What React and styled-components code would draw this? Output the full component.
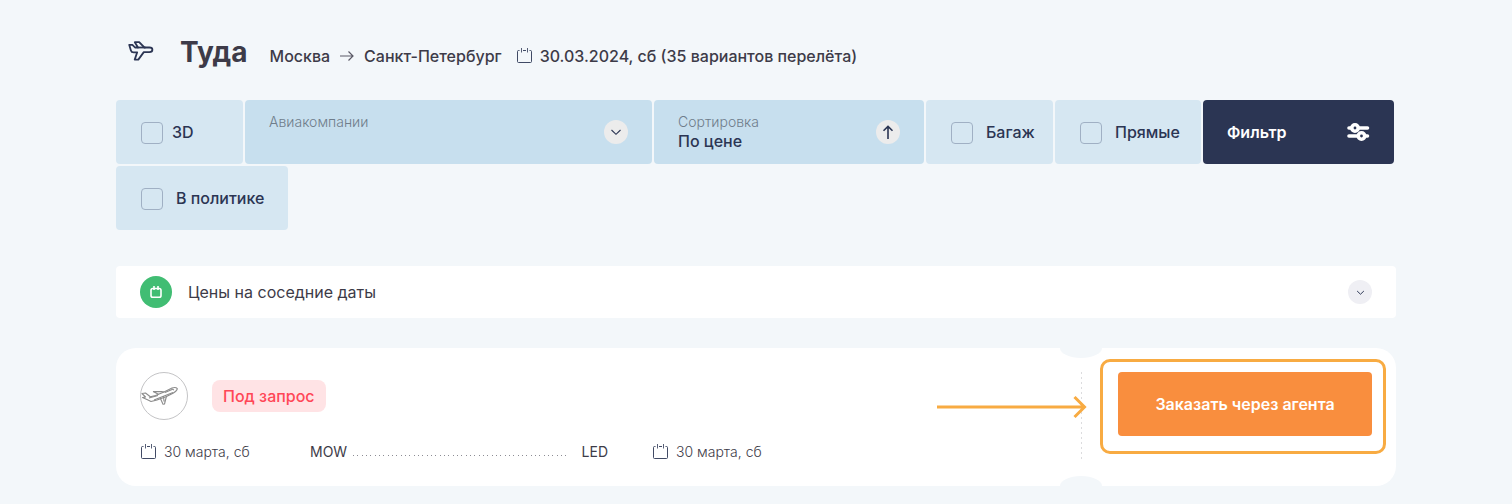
import React from "react";
import styled, { createGlobalStyle, css } from "styled-components";

const GlobalStyle = createGlobalStyle`
  *, *::before, *::after { box-sizing: border-box; }
  body {
    margin: 0;
    background: #f3f7fa;
    color: #3d3b48;
    font-family: Inter, "Noto Sans", sans-serif;
    font-size: 16px;
    line-height: 20px;
  }
  button, input, select { font: inherit; color: inherit; margin: 0; }
  button { border: 0; cursor: pointer; }
`;

const Page = styled.main`
  max-width: 1280px;
  margin: 0 auto;
  padding: 36px 0 18px;
`;

const Header = styled.header`
  display: flex;
  align-items: baseline;
  padding-left: 12px;
  margin-bottom: 32px;
`;

const HeaderIcon = styled.span`
  width: 52px;
  align-self: flex-start;
  padding-top: 4px;
  svg { display: block; }
`;

const Title = styled.h1`
  margin: 0 22px 0 0;
  font-size: 28px;
  line-height: 32px;
  font-weight: 700;
`;

const Route = styled.div`
  display: flex;
  align-items: baseline;
  gap: 10px;
  font-weight: 500;
  svg { align-self: center; }
`;

const HeaderDate = styled.div`
  display: flex;
  align-items: baseline;
  gap: 8px;
  margin-left: 14px;
  font-weight: 500;
  svg { align-self: center; }
`;

const Filters = styled.form`
  display: flex;
  flex-wrap: wrap;
  row-gap: 2px;
  margin-bottom: 36px;
  color: #2b3553;
  font-weight: 500;
`;

const tile = css`
  display: flex;
  align-items: center;
  width: ${(p) => p.$width}px;
  height: 64px;
  margin-right: 2px;
  padding: 0 24px;
  border-radius: 4px;
`;

const CheckTile = styled.label`
  ${tile}
  gap: ${(p) => p.$gap || 13}px;
  background: #d6e7f2;
  white-space: nowrap;
`;

const Checkbox = styled.input`
  appearance: none;
  flex: none;
  width: 22px;
  height: 22px;
  margin: 2px 0 0 1px;
  border: 1px solid #a0b0c4;
  border-radius: 4px;
  &:checked { background: #2b3553; }
`;

const FieldTile = styled.div`
  ${tile}
  ${(p) => p.$grow && "flex: 1 0 280px;"}
  justify-content: space-between;
  background: #c7dfee;
`;

const Field = styled.label`
  flex: 1;
  display: flex;
  flex-direction: column;
`;

const FieldName = styled.span`
  font-size: 14px;
  line-height: 18px;
  font-weight: 300;
  color: #6f7d8b;
`;

const Select = styled.select`
  appearance: none;
  width: 100%;
  height: 20px;
  padding: 0;
  border: 0;
  background: transparent;
  font-weight: 500;
`;

const Round = styled.span`
  display: flex;
  flex: none;
  align-items: center;
  justify-content: center;
  width: 24px;
  height: 24px;
  padding: 0;
  border-radius: 50%;
  background: ${(p) => p.$bg || "#ececec"};
  color: #2b3553;
`;

const FilterButton = styled.button`
  ${tile}
  justify-content: space-between;
  background: #2b3553;
  color: #fff;
  font-weight: 600;
`;

const PricesBar = styled.button`
  display: flex;
  align-items: center;
  gap: 16px;
  width: 100%;
  height: 52px;
  margin-bottom: 30px;
  padding: 0 24px;
  border-radius: 4px;
  background: #fff;
  text-align: left;
`;

const GreenBadge = styled(Round)`
  width: 32px;
  height: 32px;
  background: #41bd73;
`;

const PricesLabel = styled.span`
  flex: 1;
`;

const Card = styled.article`
  display: flex;
  border-radius: 20px;
  background: #fff;
`;

const Flight = styled.div`
  flex: 1;
  padding: 24px;
`;

const Summary = styled.div`
  display: flex;
  align-items: center;
  gap: 24px;
  margin-bottom: 22px;
`;

const Airline = styled.span`
  display: flex;
  align-items: center;
  width: 48px;
  height: 48px;
  border: 1px solid #c4c4c6;
  border-radius: 50%;
`;

const Status = styled.span`
  padding: 6px 11px;
  border-radius: 8px;
  background: #ffe3e5;
  color: #ff4757;
  font-weight: 500;
`;

const Leg = styled.div`
  display: grid;
  grid-template-columns: 126px 298px auto;
  column-gap: 44px;
  align-items: center;
  font-size: 14px;
`;

const LegDate = styled.span`
  display: flex;
  align-items: center;
  gap: 8px;
  font-weight: 300;
`;

const Path = styled.div`
  display: flex;
  align-items: center;
`;

const Dots = styled.span`
  flex: 1;
  height: 1px;
  margin: 6px 16px 0 6px;
  background: repeating-linear-gradient(90deg, #8c8c94 0 1px, transparent 1px 4px, #8c8c94 4px 5px, transparent 5px 9px, #8c8c94 9px 10px, transparent 10px 13px);
`;

const Tear = styled.div`
  position: relative;
  width: 42px;
  padding: 24px 0;
  &::before, &::after {
    content: "";
    position: absolute;
    left: 0;
    width: 42px;
    height: 20px;
    border-radius: 50%;
    background: #f3f7fa;
  }
  &::before { top: -10px; }
  &::after { bottom: -10px; }
`;

const TearLine = styled.div`
  width: 1px;
  height: 88px;
  margin: 0 auto;
  background: repeating-linear-gradient(#dcdcde 0 2px, transparent 2px 5px);
`;

const Order = styled.div`
  position: relative;
  width: 294px;
  padding: 24px 24px 50px 16px;
`;

const OrderButton = styled.button`
  width: 100%;
  height: 64px;
  border-radius: 4px;
  background: #f98e3e;
  color: #fff;
  font-weight: 600;
`;

const Highlight = styled.span`
  position: absolute;
  top: 11px;
  right: 10px;
  width: 286px;
  height: 95px;
  border: 3px solid #f8ab42;
  border-radius: 10px;
  pointer-events: none;
`;

const Pointer = styled.svg`
  position: absolute;
  top: 47px;
  right: 309px;
`;

const CalendarIcon = () => (
  <svg width="16" height="16" viewBox="0 0 16 16" fill="none" stroke="#2b3553" aria-hidden="true">
    <path d="M3.500 2.500H2.500q-1 0-1 1v10q0 1 1 1h12q1 0 1-1v-10q0-1-1-1H13.500M7 2.500h3" strokeWidth=".9" />
    <path d="M5.500 0v4.500M11.500 0v4.500" strokeWidth=".8" />
  </svg>
);

const Chevron = ({ size, width }) => (
  <svg width={size} height={size} viewBox="0 0 12 12" fill="none" stroke="currentColor" strokeWidth={width} aria-hidden="true">
    <path d="M1.500 4 6 8.300 10.500 4" />
  </svg>
);

function CheckFilter({ label, width, gap }) {
  return (
    <CheckTile $width={width} $gap={gap}>
      <Checkbox type="checkbox" />
      {label}
    </CheckTile>
  );
}

export default function App() {
  return (
    <>
      <GlobalStyle />
      <Page>
        <Header>
          <HeaderIcon>
            <svg width="26" height="22" viewBox="0 0 26 22" fill="none" stroke="#2b3553" strokeWidth="1.800" strokeLinejoin="round" aria-hidden="true">
              <path d="M1.200 4.800h3.200l2.600 2.700h3L6.800 2.200h4.400l5.200 5.300h5c2 0 3 1.200 3 2.300s-1 2.300-3 2.300h-5.600L10.300 19.600H6.700L9.200 12.300H5.600c-1.400 0-2.300-.6-2.700-1.900z" />
              <path d="M9.500 7.500h8" />
            </svg>
          </HeaderIcon>
          <Title>Туда</Title>
          <Route>
            <span>Москва</span>
            <svg width="14" height="12" viewBox="0 0 14 12" fill="none" stroke="#5b5a66" strokeWidth="1.200" aria-hidden="true">
              <path d="M0 6h13M8.500 1.500 13 6l-4.500 4.500" />
            </svg>
            <span>Санкт-Петербург</span>
          </Route>
          <HeaderDate>
            <CalendarIcon />
            <span>30.03.2024, сб (35 вариантов перелёта)</span>
          </HeaderDate>
        </Header>

        <Filters>
          <CheckFilter label="3D" width={127} gap={9} />
          <FieldTile $grow>
            <Field>
              <FieldName>Авиакомпании</FieldName>
              <Select defaultValue=""><option value="" /></Select>
            </Field>
            <Round><Chevron size={12} width={1.1} /></Round>
          </FieldTile>
          <FieldTile $width={270}>
            <Field>
              <FieldName>Сортировка</FieldName>
              <Select><option>По цене</option></Select>
            </Field>
            <Round as="button" type="button" aria-label="По возрастанию">
              <svg width="12" height="14" viewBox="0 0 12 14" fill="none" stroke="currentColor" strokeWidth="1.600" aria-hidden="true">
                <path d="M6 14V1.500M1.500 5.800 6 1.400l4.500 4.400" />
              </svg>
            </Round>
          </FieldTile>
          <CheckFilter label="Багаж" width={127} />
          <CheckFilter label="Прямые" width={146} />
          <FilterButton type="button" $width={191}>
            Фильтр
            <svg width="24" height="20" viewBox="0 0 24 20" fill="none" stroke="#fff" strokeWidth="3.600" strokeLinecap="round" aria-hidden="true">
              <path d="M3 6h2M13 6h8.500M3 14h8M19 14h2.500" />
              <circle cx="9" cy="6" r="3.200" />
              <circle cx="15.500" cy="14" r="3.200" />
            </svg>
          </FilterButton>
          <CheckFilter label="В политике" width={172} />
        </Filters>

        <PricesBar type="button" aria-expanded="false">
          <GreenBadge>
            <svg width="12" height="12" viewBox="0 0 12 12" fill="none" stroke="#fff" strokeWidth="1.600" aria-hidden="true">
              <rect x="1" y="2.500" width="10" height="8.700" rx="1.800" />
              <path d="M4 0v4M8 0v4" />
            </svg>
          </GreenBadge>
          <PricesLabel>Цены на соседние даты</PricesLabel>
          <Round $bg="#efeff4"><Chevron size={9} width={1.3} /></Round>
        </PricesBar>

        <Card>
          <Flight>
            <Summary>
              <Airline>
                <svg width="38" height="20" viewBox="0 0 38 20" fill="none" stroke="#8c8c8c" strokeWidth="1.100" strokeLinejoin="round" aria-hidden="true">
                  <path d="M1 7.500 4.500 7l4.800 3.800 5.200-1.200L23 6l8-4c2.500-.9 4.300-.6 5.300.6-.2 1.800-2 3.200-4.300 4.600l-7 3.600-9 3.200-6 1.500-3-1.500-5.500-2.500L4.500 11 3 9.500z" />
                  <path d="M12 5.500l8.500.1L23.500 6M12 5.500l5.500 2.700M19 11.500l3 6.700 1.500-.2 2-8M22.500 10.500l.5 5M8 12l9-2.500M13 14l19-7.500M31 3l2 1M24 6.500l7-3" />
                </svg>
              </Airline>
              <Status>Под запрос</Status>
            </Summary>
            <Leg>
              <LegDate><CalendarIcon />30 марта, сб</LegDate>
              <Path>
                <span>MOW</span>
                <Dots />
                <span>LED</span>
              </Path>
              <LegDate><CalendarIcon />30 марта, сб</LegDate>
            </Leg>
          </Flight>
          <Tear><TearLine /></Tear>
          <Order>
            <OrderButton type="button">Заказать через агента</OrderButton>
            <Highlight />
            <Pointer width="150" height="24" viewBox="0 0 150 24" fill="none" stroke="#f8ab42" strokeWidth="3" aria-hidden="true">
              <path d="M0 12h147M137.500 2l10 10-10 10" />
            </Pointer>
          </Order>
        </Card>
      </Page>
    </>
  );
}
